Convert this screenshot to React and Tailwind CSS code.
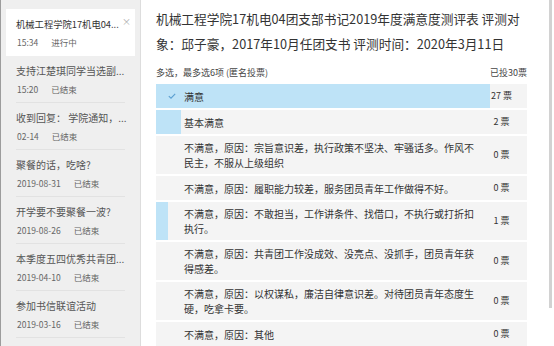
import React from "react";

const sessions = [
  { title: "机械工程学院17机电04...", time: "15:34", status: "进行中", active: true },
  { title: "支持江楚琪同学当选副...", time: "15:20", status: "已结束" },
  { title: "收到回复： 学院通知，...", time: "02-14", status: "已结束" },
  { title: "聚餐的话，吃啥?", time: "2019-08-31", status: "已结束" },
  { title: "开学要不要聚餐一波?", time: "2019-08-26", status: "已结束" },
  { title: "本季度五四优秀共青团...", time: "2019-04-10", status: "已结束" },
  { title: "参加书信联谊活动", time: "2019-03-16", status: "已结束" },
];

const totalVotes = 30;

const options = [
  { lines: ["满意"], votes: 27, checked: true },
  { lines: ["基本满意"], votes: 2 },
  { lines: ["不满意，原因：宗旨意识差，执行政策不坚决、牢骚话多。作风不", "民主，不服从上级组织"], votes: 0 },
  { lines: ["不满意，原因：履职能力较差，服务团员青年工作做得不好。"], votes: 0 },
  { lines: ["不满意，原因：不敢担当，工作讲条件、找借口，不执行或打折扣", "执行。"], votes: 1 },
  { lines: ["不满意，原因：共青团工作没成效、没亮点、没抓手，团员青年获", "得感差。"], votes: 0 },
  { lines: ["不满意，原因：以权谋私，廉洁自律意识差。对待团员青年态度生", "硬，吃拿卡要。"], votes: 0 },
  { lines: ["不满意，原因：其他"], votes: 0 },
];

const SessionItem = ({ item }) => (
  <div className={`relative h-[47px] px-[10px] ${item.active ? "bg-white" : ""}`}>
    <div className={`h-full pt-[8px] ${item.active ? "" : "border-b border-[#e2e2e2]"}`}>
      <div
        className={`whitespace-nowrap leading-[14px] ${
          item.active ? "text-[9.3px] text-[#333]" : "text-[10px] text-[#555]"
        }`}
      >
        {item.title}
      </div>
      <div className="mt-[4px] flex text-[8.5px] leading-[14px] text-[#666] whitespace-nowrap">
        <span className="ml-[1px]">{item.time}</span>
        <span className="ml-[13px]">{item.status}</span>
      </div>
    </div>
    {item.active && (
      <span className="absolute right-[4px] top-[7px] text-[9px] leading-[12px] text-[#aaa]">×</span>
    )}
  </div>
);

const OptionRow = ({ opt }) => (
  <div className="relative flex items-center min-h-[24px] bg-[#f4f4f4]">
    {/* 票数占比条 */}
    <div
      className="absolute left-0 top-0 bottom-0 bg-[#bee3f7]"
      style={{ width: `${(opt.votes / totalVotes) * 100}%` }}
    />
    {opt.checked && (
      <svg className="absolute left-[12px] top-[9px]" width="8" height="6" viewBox="0 0 8 6">
        <path d="M0.8 3.2 L3 5.2 L7.2 0.8" fill="none" stroke="#5b9fd1" strokeWidth="1.1" />
      </svg>
    )}
    <div className="relative flex-1 pl-[28px] py-[4px] text-[10px] leading-[15px] text-[#333]">
      {opt.lines.map((l, i) => (
        <div key={i} className="whitespace-nowrap">{l}</div>
      ))}
    </div>
    <div className="relative w-[51px] text-center text-[9px] text-[#333] whitespace-nowrap">
      {opt.votes} 票
    </div>
  </div>
);

export default function App() {
  return (
    <div className="w-[554px] h-[346px] flex overflow-hidden bg-white font-['Noto_Sans_CJK_SC','Noto_Sans',sans-serif]">
      {/* 左侧会话列表 */}
      <div className="w-[141px] shrink-0 bg-[#efefef] border-l border-[#9c9c9c] border-r border-r-[#dddddd] pt-[9px] px-[5px]">
        {sessions.map((s, i) => (
          <SessionItem key={i} item={s} />
        ))}
      </div>

      {/* 右侧投票详情 */}
      <div className="flex-1 pl-[15px] pr-[21px] pt-[6px]">
        <div className="text-[12.7px] leading-[25px] text-[#333]">
          <div className="whitespace-nowrap">机械工程学院17机电04团支部书记2019年度满意度测评表 评测对</div>
          <div className="whitespace-nowrap">象：邱子豪，2017年10月任团支书 评测时间：2020年3月11日</div>
        </div>
        <div className="mt-[11px] flex justify-between text-[9px] leading-[12px] text-[#444]">
          <span>多选，最多选6项 (匿名投票)</span>
          <span>已投30票</span>
        </div>
        <div className="mt-[5px] flex flex-col gap-[2px]">
          {options.map((o, i) => (
            <OptionRow key={i} opt={o} />
          ))}
        </div>
      </div>

      {/* 滚动条 */}
      <div className="relative w-[6px] shrink-0 bg-white">
        <div className="absolute left-[1px] top-0 h-[308px] w-[3px] bg-[#d2d2d2]" />
      </div>
    </div>
  );
}
